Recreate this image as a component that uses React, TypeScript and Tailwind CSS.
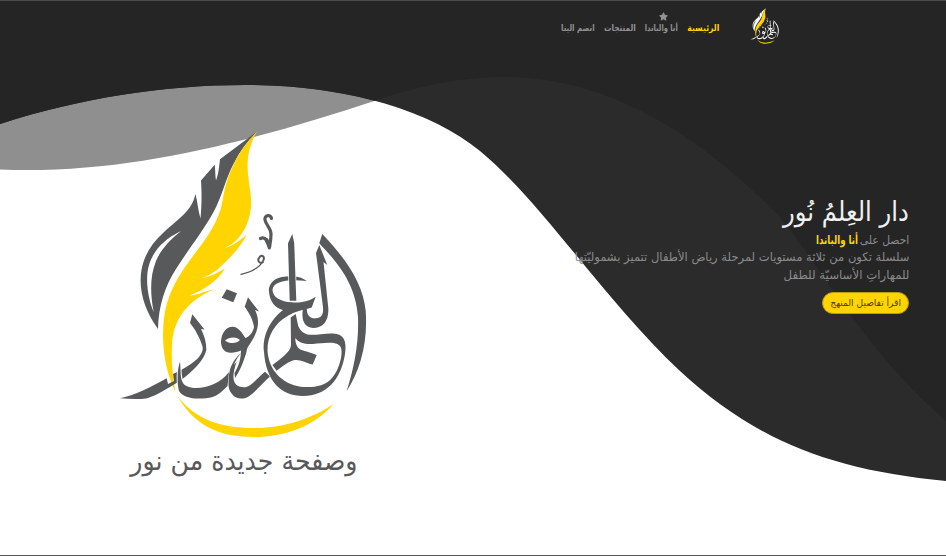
import React from "react";
import { FaStar } from "react-icons/fa";

const ARABIC = "font-['DejaVu_Sans',sans-serif]";

function Emblem({ className, gap }: { className: string; gap: string }) {
  return (
    <svg viewBox="118 130 250 309" className={className} fill="currentColor" aria-label="دار العلم نور">
      {/* dark half of the quill */}
      <path
        fillRule="evenodd"
        d="M257 131.500L220 159.3C219 168 218.500 174 216 180.500C215 175 215.500 170 214.700 164.700L201 180.500C202 194 201.500 207 200.500 218.500C198 210 197.500 202 195.500 194C194 200 192.500 203 190 207C183 217 171 225 163 233C151 244 144 256 141.500 270C138 290 145 311 158 329C158.500 306 165 286 176 269C188 250 203 231 213 213C222 197 225 180 234 163C240 151 248 141 257 131.500ZM181 231C162 240 150 254 147.500 272C146 286 149 301 153.700 312C150 293 150 276 156 261C161 249 170 240 181 231Z"
      />
      {/* yellow half */}
      <path
        className="text-[#ffd400]"
        d="M257 131.500C249.500 145 247 157 247.700 170C248.500 184 252 195 251 207C249 228 238 243 223.500 248.500C233 246 241 240 246.700 234.300C241 247 231 257 217 270C211 274 206 277 200.700 278C210 277 218 273 225 268.300C218 281 204 290 189.300 295.700C198 295 206 291 214.300 289.300C186 301 173 321 172 345C171 363 173 378 175.300 391.700C165 370 161 345 164 318C167 296 175 282 185 267C198 248 214 232 221 208C224 196 224 184 234 164C240 151 248 141 257 131.500Z"
      />
      <path className="text-[#ffd400]" d="M177.700 396C194 419 221 428 253 428C285 428 313 418 334 403.700C314 426 286 437 253 437C217 437 192 423 177.700 396Z" />
      {/* first letter with its long left tail */}
      <path d="M192.300 314.300L204.500 329.500L201 329C204 335 206.500 342 206.300 350C204 361 190 375 174 384.500C163 391 153 397 146 398.500C138 399.500 129 399 120 398.300C136 395 151 387 166.700 378.300L168 384L174 381L173 374C184 369 195 362 199 357C202 353 203 350 202.700 347C200 338 195 329 190 323Z" />
      <path stroke={gap} strokeWidth="2" paintOrder="stroke" d="M180 361.700C181 372 180 378 183 383C189 392 217 389 229 372L227.500 386C219 395 213 398.500 202 398.500C191 399 183 397 179 391C177 383 177 370 180 361.700Z" />
      <path d="M226.700 289.300L237 293.300L233.300 302.300L221.700 297.700Z" />
      <path
        fillRule="evenodd"
        d="M248 297.300L259 311.500L255 310C259 318 259 326 255 335C251 344 247 346 246.500 352C243 363 240 371 235 378L234.500 373C239 366 241 358 241 350.500C237 352 234 353 230 352.700C223 352 221 347 221 341C222 332 226 327 232.700 326.700C239 327 242 333 245.500 338C250 336 253 332 254 327C253 319 249 313 244.700 306.700ZM225 340.500C229 337 236 336 240 340C237 344 229 344 225 340.500Z"
      />
      <path d="M241 353C234 359 230 366 229 375C228 384 228 390 232 394C235 398 239 399 243 398.500C251 398 258 387 270 376.500L265 371.700C257 378 251 387 245 387.300C234 388 230 380 236.700 361.700L234 365C235 361 238 357 241 353Z" />
      {/* looped body */}
      <path
        stroke={gap}
        strokeWidth="1.2"
        paintOrder="stroke"
        d="M306.700 281C299 275 289 276 281.700 277C272 279 268 286 269 292C270 302 275 308 283 310C270 320 262 336 264 352C266 381 281 396 303.300 396C326 396 341 380 345 354C347 341 344 334 333 333.500C322 333 310 337 304 333C299 330 296 323 295.700 315L291 317.500L295 337.700C299 343 305 344.500 313 344C323 343 336 341 340 346C344 351 340 369 332 378C325 386 315 387.500 304 387C286 386 269 373 267.500 351C267 335 276 323 286 317C295 311 303 310 311.700 307.500L315.700 296.700C308 302 299 303 291.700 302.300C281 302 272.500 297 272.500 290C273 280 291 279 306.700 281Z"
      />
      {/* stem and foot crossing the loop */}
      <path d="M295.700 314L290.700 317.500L291 345C291 352 279 360 272.500 365L276.500 370.700C283 366 289 361 295 360C301 359.500 306 363 312.700 364.500L316.700 355C308 351 300 351 297.500 347C295.500 343 295 340 295.500 337.700L299 330Z" />
      <path stroke={gap} strokeWidth="1.5" paintOrder="stroke" d="M292.300 234L294.200 243L296.300 300.700L289.700 300.700L288 243.300Z" />
      {/* right-hand letters */}
      <path d="M319.300 245L327.300 265L323.500 262L328.300 308C329 321 323 328 313 328C304 327 301 320 303 308L307 307C306 315 310 319 316 318.300C322 318 323.500 314 323 307L316 253Z" />
      <path d="M322.300 234C346 259 363 283 365.700 311C368 343 360 371 346.700 391C354 368 359 344 358 317C356 287 341 266 321.700 246L319.300 243.300Z" />
      {/* vowel marks */}
      <g fill="none" stroke="currentColor" strokeLinecap="round" strokeLinejoin="round">
        <path strokeWidth="3.200" d="M271.500 218.500C271 214 264 215 265 220C266 225 271 228 271 234C271 240 270 244 269.300 248C269 243 266 236 260.500 238.500" />
        <path strokeWidth="4" d="M269.300 246L266.500 240" />
        <path strokeWidth="2" d="M263 262C260 264 257 261 259 258C261 254 265 256 263.500 260" />
        <path strokeWidth="1.300" d="M263.500 260C260 268 251 272 241 274.300" />
      </g>
    </svg>
  );
}

function FittedText({ className, children }: { className: string; children: React.ReactNode }) {
  return <span className={`block w-max origin-right whitespace-nowrap ${className}`}>{children}</span>;
}

export default function App() {
  return (
    <div dir="rtl" className={`relative isolate h-[556px] w-[946px] overflow-hidden border-t border-b border-t-[#4b4b4b] border-b-[#555] bg-white ${ARABIC}`}>
      <svg viewBox="0 1 946 554" className="absolute inset-0 -z-10 h-[554px] w-[946px]">
        <path fill="#8f8f8f" d="M0 0H946V421C865 350 830 280 780 217C708 143 615 77 505 77C465 77 425 84 375 100.700C255 140 130 175 0 169.500Z" />
        <path fill="#2b2b2b" d="M0 0H946V481C830 470 755 440 680 371C604 300 543 203 480 151C430 110 345 85 245 85C165 85 80 98 0 124Z" />
        <path fill="#252525" d="M0 0H946V421C865 350 830 280 780 217C708 143 615 77 505 77C465 77 425 84 374 100.700C333 90 290 85 245 85C165 85 80 98 0 124Z" />
      </svg>

      <header className="flex h-[54px] items-start pr-[167px]">
        <Emblem gap="#252525" className="mt-[7px] h-[36px] w-[29px] text-white" />
        <nav className="mr-[31px] flex gap-[9px] pt-[19px] text-[9px] leading-[16px] font-bold text-[#929292]">
          <a className="w-[32px] text-[#ffd400]"><FittedText className="scale-x-[0.86]">الرئيسية</FittedText></a>
          <a className="relative w-[33px]">
            <FaStar className="absolute -top-[8px] left-[14px] size-[9px]" />
            <FittedText className="scale-x-[0.755]">أنا والباندا</FittedText>
          </a>
          <a className="w-[32px]"><FittedText className="scale-x-[0.82]">المنتجات</FittedText></a>
          <a className="w-[34px]"><FittedText className="scale-x-[0.79]">انضم الينا</FittedText></a>
        </nav>
      </header>

      <main className="flex justify-between">
        <section className="w-[380px] pt-[137px] pr-[37px] text-[#8a8a8a]">
          <h1 className="h-[40px] text-[27px] leading-[39px] text-[#f0f0f0]">
            <FittedText className="scale-x-[0.9]">دار العِلمُ نُور</FittedText>
          </h1>
          <div className="text-[12px] leading-[17.250px]">
            <FittedText className="scale-x-[0.9]">احصل على <b className="-mr-[2px] inline-block origin-right scale-x-[0.8] text-[#ffd400]">أنا والباندا</b></FittedText>
            <FittedText className="scale-x-[0.963]">سلسلة تكون من ثلاثة مستويات لمرحلة رياض الأطفال تتميز بشموليّتها</FittedText>
            <FittedText className="scale-x-[0.98]">للمهاراتِ الأساسيّة للطفل</FittedText>
          </div>
          <button className="mt-[8px] flex h-[22px] w-[87px] items-center rounded-full border border-[#b99c10] bg-[#ffd400] pr-[7px] text-[9.500px] text-[#4a400d]">
            <FittedText className="scale-x-[0.955]">اقرأ تفاصيل المنهج</FittedText>
          </button>
        </section>

        <figure className="ml-[118px] w-[250px] pt-[75px] text-[#58595b]">
          <Emblem gap="#ffffff" className="h-[309px] w-[250px]" />
          <figcaption className="mt-[4px] mr-[11px] text-[27px] leading-[36px]">
            <FittedText className="scale-x-[0.933]">وصفحة جديدة من نور</FittedText>
          </figcaption>
        </figure>
      </main>
    </div>
  );
}
